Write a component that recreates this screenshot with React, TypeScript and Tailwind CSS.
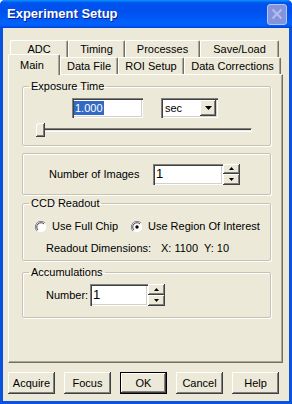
import React from "react";

const raised =
  "shadow-[inset_-1px_-1px_0_#404040,inset_1px_1px_0_#ffffff,inset_-2px_-2px_0_#808080,inset_2px_2px_0_#ece9d8]";
const sunken =
  "shadow-[inset_1px_1px_0_#808080,inset_2px_2px_0_#404040,inset_-1px_-1px_0_#ffffff,inset_-2px_-2px_0_#d4d0c8]";

function Arrow({ up }: { up: boolean }) {
  return (
    <svg width="5" height="3" viewBox="0 0 5 3">
      {up ? <path d="M2.5 0 L5 3 L0 3 Z" fill="#000" /> : <path d="M0 0 L5 0 L2.5 3 Z" fill="#000" />}
    </svg>
  );
}

function Spinner() {
  return (
    <div className="flex flex-col w-[17px] h-full">
      <div className={`flex-1 bg-[#ece9d8] flex items-center justify-center ${raised}`}>
        <Arrow up />
      </div>
      <div className={`flex-1 bg-[#ece9d8] flex items-center justify-center ${raised}`}>
        <Arrow up={false} />
      </div>
    </div>
  );
}

function Radio({ checked }: { checked: boolean }) {
  return (
    <svg width="12" height="12" viewBox="0 0 12 12">
      <circle cx="6" cy="6" r="5.5" fill="#ffffff" />
      <path d="M10 2 A5.5 5.5 0 0 0 2 10" stroke="#808080" strokeWidth="1" fill="none" />
      <path d="M9 3 A4.2 4.2 0 0 0 3 9" stroke="#404040" strokeWidth="1" fill="none" />
      <path d="M2 10 A5.5 5.5 0 0 0 10 2" stroke="#ece9d8" strokeWidth="1" fill="none" />
      {checked && <circle cx="6" cy="6" r="1.7" fill="#000" />}
    </svg>
  );
}

export default function App() {
  return (
    <div className="w-[292px] h-[404px] bg-[#0a53e0] flex flex-col font-['Liberation_Sans',Arial,sans-serif] text-[11px] text-black overflow-hidden rounded-t-[5px]">
      {/* Title bar */}
      <div className="h-[28px] shrink-0 flex items-center justify-between pl-[7px] pr-[5px] bg-[linear-gradient(to_bottom,#0997ff_0%,#0053ee_10%,#0050ee_40%,#0062fb_85%,#0059f5_93%,#003dd7_100%)]">
        <span className="text-white font-bold text-[13px] [text-shadow:1px_1px_0_#0a1d8a]">
          Experiment Setup
        </span>
        <div className="w-[20px] h-[21px] rounded-[3px] border border-[#b9c4f0] bg-[#8394dc] flex items-center justify-center">
          <svg width="12" height="12" viewBox="0 0 12 12">
            <path d="M1.5 1.5 L10.5 10.5 M10.5 1.5 L1.5 10.5" stroke="#b4bdea" strokeWidth="2" />
          </svg>
        </div>
      </div>

      {/* Body */}
      <div className="flex-1 mx-[3px] mb-[3px] bg-[#ece9d8] pt-[12px] pl-[5px] pr-[6px] flex flex-col">
        {/* Tab row 1 */}
        <div className="flex h-[17px] pl-[2px]">
          {[
            ["ADC", "w-[58px]"],
            ["Timing", "w-[57px]"],
            ["Processes", "w-[75px]"],
            ["Save/Load", "w-[79px]"],
          ].map(([t, w]) => (
            <div
              key={t}
              className={`${w} h-[17px] border-l border-t border-white border-r border-r-[#716f64] rounded-t-[2px] shadow-[inset_-1px_0_0_#aca899] flex items-center justify-center`}
            >
              {t}
            </div>
          ))}
        </div>
        {/* Tab row 2 */}
        <div className="flex items-end h-[17px]">
          <div className="w-[52px] h-[21px] -mb-px relative z-10 bg-[#ece9d8] border-l border-t border-white border-r border-r-[#716f64] rounded-t-[2px] shadow-[inset_-1px_0_0_#aca899] flex items-start justify-center pt-[2px] pr-[4px]">
            Main
          </div>
          {[
            ["Data File", "w-[58px]"],
            ["ROI Setup", "w-[66px]"],
            ["Data Corrections", "w-[97px]"],
          ].map(([t, w]) => (
            <div
              key={t}
              className={`${w} h-[17px] border-l border-t border-white border-r border-r-[#716f64] rounded-t-[2px] shadow-[inset_-1px_0_0_#aca899] flex items-center justify-center whitespace-nowrap`}
            >
              {t}
            </div>
          ))}
        </div>

        {/* Panel */}
        <div className="h-[289px] border-l border-t border-white border-r border-b border-r-[#716f64] border-b-[#716f64] shadow-[inset_-1px_-1px_0_#aca899] pl-[13px] pt-[5px] flex flex-col">
          {/* Exposure Time */}
          <fieldset className="w-[249px] h-[66px] border border-[#c6c3b3] rounded-[2px] shadow-[inset_1px_1px_0_#ffffff,1px_1px_0_#ffffff]">
            <legend className="ml-[6px] px-[2px] leading-[13px]">Exposure Time</legend>
            <div className="flex mt-[5px] ml-[49px]">
              <div className={`w-[71px] h-[20px] bg-white ${sunken} flex items-center pl-[2px]`}>
                <span className="bg-[#316ac5] text-white leading-[14px] px-[1px]">1.000</span>
              </div>
              <div className={`ml-[18px] w-[57px] h-[20px] bg-white ${sunken} flex items-center justify-between pl-[4px] pr-[2px]`}>
                <span>sec</span>
                <div className={`w-[16px] h-[16px] bg-[#ece9d8] ${raised} flex items-center justify-center`}>
                  <svg width="7" height="4" viewBox="0 0 7 4">
                    <path d="M0 0 L7 0 L3.5 4 Z" fill="#000" />
                  </svg>
                </div>
              </div>
            </div>
            <div className="relative mt-[5px] ml-[13px] w-[216px] h-[14px] flex items-center">
              <div className="w-full h-[4px] border-t border-l border-[#808080] border-b border-r border-b-white border-r-white shadow-[inset_1px_1px_0_#404040]" />
              <div className={`absolute left-0 top-0 w-[9px] h-[14px] bg-[#ece9d8] rounded-tl-[3px] ${raised}`} />
            </div>
          </fieldset>

          {/* Number of Images */}
          <div className="mt-[7px] w-[249px] h-[42px] border border-[#c6c3b3] rounded-[2px] shadow-[inset_1px_1px_0_#ffffff,1px_1px_0_#ffffff] flex items-center pl-[26px]">
            <span className="w-[104px]">Number of Images</span>
            <div className="flex h-[21px]">
              <div className={`w-[70px] h-[21px] bg-white ${sunken} flex items-center pl-[3px] text-[13px]`}>1</div>
              <Spinner />
            </div>
          </div>

          {/* CCD Readout */}
          <fieldset className="mt-[2px] w-[249px] h-[64px] border border-[#c6c3b3] rounded-[2px] shadow-[inset_1px_1px_0_#ffffff,1px_1px_0_#ffffff]">
            <legend className="ml-[6px] px-[2px] leading-[13px]">CCD Readout</legend>
            <div className="flex items-center mt-[10px] ml-[12px] h-[13px] whitespace-nowrap">
              <Radio checked={false} />
              <span className="ml-[5px] w-[79px]">Use Full Chip</span>
              <Radio checked />
              <span className="ml-[5px]">Use Region Of Interest</span>
            </div>
            <div className="flex items-center mt-[9px] ml-[23px] h-[13px]">
              <span className="w-[115px]">Readout Dimensions:</span>
              <span>X: 1100&nbsp; Y: 10</span>
            </div>
          </fieldset>

          {/* Accumulations */}
          <fieldset className="mt-[5px] w-[249px] h-[52px] border border-[#c6c3b3] rounded-[2px] shadow-[inset_1px_1px_0_#ffffff,1px_1px_0_#ffffff]">
            <legend className="ml-[6px] px-[2px] leading-[13px]">Accumulations</legend>
            <div className="flex items-center mt-[5px] ml-[23px]">
              <span className="w-[44px]">Number:</span>
              <div className="flex h-[22px]">
                <div className={`w-[58px] h-[22px] bg-white ${sunken} flex items-center pl-[3px] text-[13px]`}>1</div>
                <Spinner />
              </div>
            </div>
          </fieldset>
        </div>

        {/* Buttons */}
        <div className="flex gap-[9px] mt-[9px]">
          {["Acquire", "Focus", "OK", "Cancel", "Help"].map((b) => (
            <div
              key={b}
              className={`w-[47px] h-[22px] bg-[#ece9d8] flex items-center justify-center ${
                b === "OK"
                  ? "border border-black shadow-[inset_-1px_-1px_0_#404040,inset_1px_1px_0_#ffffff,inset_-2px_-2px_0_#808080]"
                  : raised
              }`}
            >
              {b}
            </div>
          ))}
        </div>
      </div>
    </div>
  );
}
